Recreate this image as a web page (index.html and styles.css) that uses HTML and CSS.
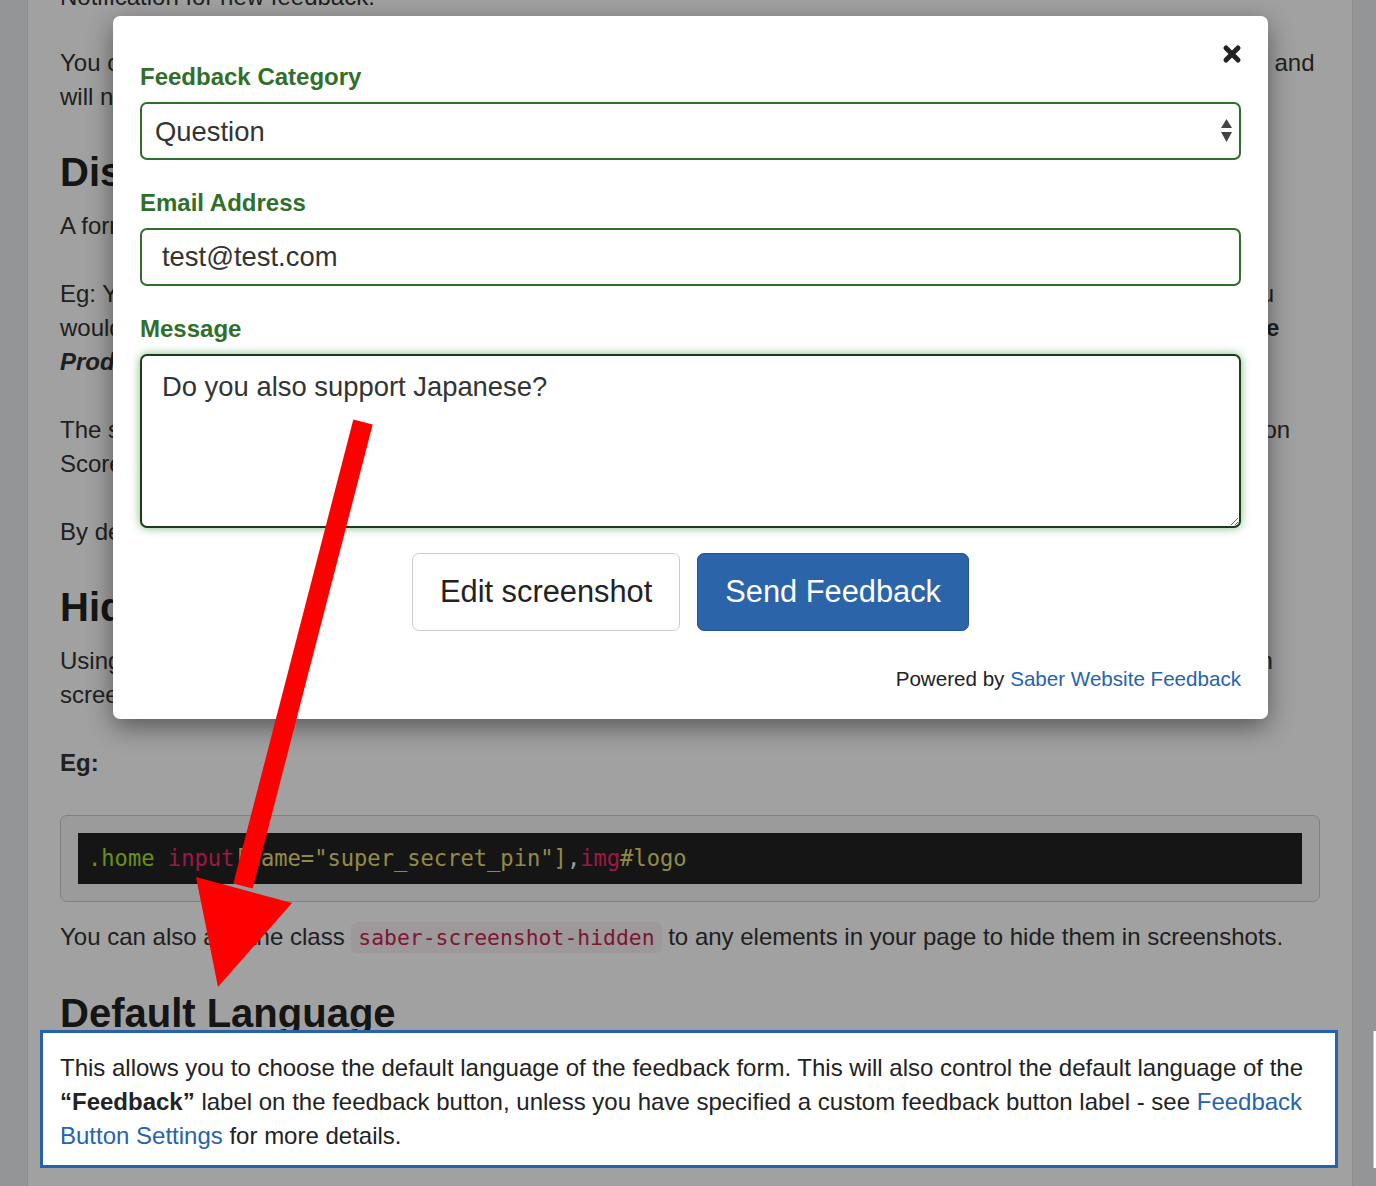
FILE: index.html
```html
<!DOCTYPE html>
<html lang="en">
<head>
  <meta charset="UTF-8">
  <title>Feedback Settings</title>
  <link rel="stylesheet" href="styles.css">
</head>
<body>
  <div class="page">
    <p class="first">Notification for new feedback.</p>
    <p class="lines">You can choose to receive an email notification every time a fresh piece of feedback is submitted on your website, and<br>will never miss a message from your users.</p>

    <h2>Display Categories</h2>
    <p>A form field that lets your users pick a category for their feedback.</p>
    <p class="lines">Eg: You might have a separate support team who takes care of incoming questions about all your products, so you<br>would like incoming feedback about your products, to be sent straight to them. In that case, set this category <b>Name</b><br><b><i>Product Questions</i></b> and enter the email address of your support team.</p>
    <p class="lines">The selected category will be included in the notification email that is sent to you and shown next to the feedback on<br>Scores page of your dashboard.</p>
    <p>By default, no category field is shown.</p>

    <h2>Hide Elements in Screenshots</h2>
    <p class="lines">Using the setting below, you can enter CSS selectors for any page elements that you do not want to be included in<br>screenshots, such as private data or payment details.</p>
    <p><b>Eg:</b></p>
    <pre class="code-box"><code><span class="c-cls">.home</span> <span class="c-tag">input</span><span class="c-str">[name="super_secret_pin"]</span><span class="c-pun">,</span><span class="c-tag">img</span><span class="c-str">#logo</span></code></pre>
    <p>You can also add the class <code class="inline">saber-screenshot-hidden</code> to any elements in your page to hide them in screenshots.</p>

    <h2>Default Language</h2>
    <p class="note">This allows you to choose the default language of the feedback form. This will also control the default language of the <b>“Feedback”</b> label on the feedback button, unless you have specified a custom feedback button label - see <a href="#">Feedback Button Settings</a> for more details.</p>
  </div>

  <div class="dim"></div>
  <div class="side-box"></div>

  <div class="modal" role="dialog" aria-label="Send feedback">
    <button type="button" class="close" aria-label="Close">
      <svg viewBox="0 0 20 20" width="20" height="20"><path d="M4 4 L16 16 M16 4 L4 16" stroke="#222" stroke-width="5" stroke-linecap="round" fill="none"/></svg>
    </button>
    <form class="feedback-form">
      <div class="field">
        <label for="category">Feedback Category</label>
        <div class="select-wrap">
          <select id="category">
            <option>Question</option>
            <option>Bug Report</option>
            <option>Suggestion</option>
          </select>
          <svg class="select-arrows" viewBox="0 0 11 23" width="11" height="23"><path d="M5.5 0 L11 9 L0 9 Z M0 13 L11 13 L5.5 23 Z" fill="#444"/></svg>
        </div>
      </div>
      <div class="field">
        <label for="email">Email Address</label>
        <input id="email" type="email" value="test@test.com">
      </div>
      <div class="field">
        <label for="message">Message</label>
        <textarea id="message" class="focused">Do you also support Japanese?</textarea>
      </div>
      <div class="actions">
        <button type="button" class="btn">Edit screenshot</button>
        <button type="submit" class="btn btn-primary">Send Feedback</button>
      </div>
      <p class="powered">Powered by <a href="#">Saber Website Feedback</a></p>
    </form>
  </div>

  <svg class="arrow" viewBox="0 0 1376 1186" width="1376" height="1186">
    <line x1="363" y1="422" x2="243" y2="886" stroke="#fe0000" stroke-width="20"/>
    <polygon points="196,877 292,903 218,987" fill="#fe0000"/>
  </svg>
</body>
</html>
```

FILE: styles.css
```css
* { box-sizing: border-box; }
html, body {
  margin: 0;
  height: 100%;
}
body {
  position: relative;
  overflow: hidden;
  background: #e9ecef;
  font-family: "Liberation Sans", Arial, sans-serif;
  color: #333;
}

/* documentation page behind the overlay */
.page {
  display: flow-root;
  margin-left: 27px;
  width: 1326px;
  min-height: 100%;
  padding: 0 32px;
  background: #fff;
  border-left: 1px solid #dcdfe2;
  border-right: 1px solid #dcdfe2;
  font-size: 24px;
  line-height: 34px;
}
.page p {
  margin: 0 0 34px;
}
.page p.first {
  margin-top: -20px;
  margin-bottom: 32px;
}
.page p.lines {
  white-space: nowrap;
}
.page h2 {
  margin: 36px 0 15px;
  font-size: 40px;
  line-height: 44px;
  color: #222;
}
.code-box {
  margin: 35px 0 18px;
  padding: 17px;
  background: #f5f5f5;
  border: 1px solid #ccc;
  border-radius: 7px;
}
.code-box code {
  display: block;
  padding: 0 10px;
  background: #222;
  font-family: "DejaVu Sans Mono", "Liberation Mono", monospace;
  font-size: 22.1px;
  line-height: 51px;
  color: #f8f8f2;
}
.c-cls { color: #a6e22e; }
.c-tag { color: #f92672; }
.c-str { color: #e6db74; }
.c-pun { color: #f8f8f2; }
code.inline {
  padding: 3px 7px;
  background: #f9f2f4;
  color: #c7254e;
  border-radius: 6px;
  font-family: "DejaVu Sans Mono", "Liberation Mono", monospace;
  font-size: 21.4px;
}
.page a {
  color: #2563ae;
  text-decoration: none;
}

/* highlighted paragraph sits above the dimmer */
.page p.note {
  position: relative;
  z-index: 2;
  margin: -20px -18px 0 -20px;
  padding: 18px 17px 12px;
  background: #fff;
  border: 3px solid #2462b0;
  color: #222;
}

.dim {
  position: absolute;
  inset: 0;
  z-index: 1;
  background: rgba(0, 0, 0, 0.37);
}
.side-box {
  position: absolute;
  left: 1373px;
  top: 1031px;
  width: 3px;
  height: 137px;
  z-index: 2;
  background: #fff;
  border-left: 1px solid #c4c4c4;
}

/* feedback modal */
.modal {
  position: absolute;
  top: 16px;
  left: 113px;
  z-index: 3;
  width: 1155px;
  padding: 44px 27px 26px;
  background: #fff;
  border-radius: 7px;
  box-shadow: 0 8px 26px rgba(0, 0, 0, 0.45);
}
.close {
  position: absolute;
  top: 28px;
  right: 26px;
  width: 20px;
  height: 20px;
  padding: 0;
  border: 0;
  background: none;
  cursor: pointer;
}
.close svg { display: block; }
.field {
  margin-bottom: 26px;
}
.field label {
  display: block;
  margin-bottom: 8px;
  font-size: 24px;
  line-height: 34px;
  font-weight: bold;
  color: #2f6f2b;
}
.select-wrap {
  position: relative;
}
.field select,
.field input,
.field textarea {
  display: block;
  width: 100%;
  margin: 0;
  background: #fff;
  border: 2px solid #2f6f2b;
  border-radius: 7px;
  font-family: "Liberation Sans", Arial, sans-serif;
  font-size: 27.4px;
  color: #333;
  outline: none;
}
.field select {
  -webkit-appearance: none;
  appearance: none;
  height: 58px;
  padding: 0 40px 0 13px;
}
.select-arrows {
  position: absolute;
  top: 17px;
  right: 9px;
  pointer-events: none;
}
.field input {
  height: 58px;
  padding: 0 20px;
}
.field textarea {
  height: 174px;
  padding: 11px 20px;
  line-height: 1.42857;
}
.field textarea.focused {
  border-color: #1f3a1f;
  box-shadow: 0 0 10px rgba(103, 177, 104, 0.85);
}
.actions {
  display: flex;
  justify-content: center;
  gap: 17px;
  margin-top: -1px;
}
.btn {
  padding: 17px 27px;
  border: 1px solid #ccc;
  border-radius: 7px;
  background: #fff;
  color: #222;
  font-family: "Liberation Sans", Arial, sans-serif;
  font-size: 30.8px;
  line-height: 42px;
  cursor: pointer;
}
.btn-primary {
  background: #2b64a8;
  border-color: #22548f;
  color: #fff;
}
.powered {
  margin: 33px 0 0;
  text-align: right;
  font-size: 20.6px;
  line-height: 29px;
  color: #222;
}
.powered a {
  color: #2563ae;
  text-decoration: none;
}

.arrow {
  position: absolute;
  top: 0;
  left: 0;
  z-index: 5;
  pointer-events: none;
}
```
